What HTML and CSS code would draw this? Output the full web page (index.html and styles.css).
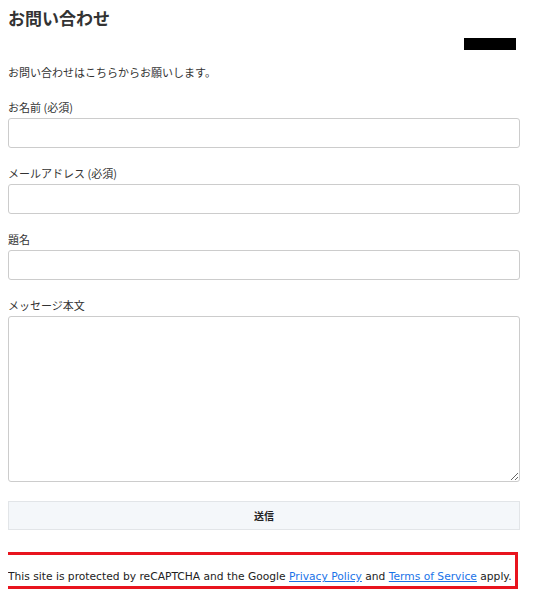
FILE: index.html
```html
<!DOCTYPE html>
<html lang="ja">
<head>
  <meta charset="UTF-8" />
  <meta name="viewport" content="width=device-width, initial-scale=1.0"/>
  <title>お問い合わせ</title>
  <link rel="stylesheet" href="styles.css">
</head>
<body>
  <div class="page">
    <h1 class="title">お問い合わせ</h1>
    <div class="bar-row"><span class="black-bar"></span></div>
    <p class="intro">お問い合わせはこちらからお願いします。</p>

    <form class="contact">
      <label class="label" for="name">お名前 (必須)</label>
      <input class="field" id="name" type="text">

      <label class="label" for="mail">メールアドレス (必須)</label>
      <input class="field" id="mail" type="email">

      <label class="label" for="subject">題名</label>
      <input class="field" id="subject" type="text">

      <label class="label" for="body">メッセージ本文</label>
      <textarea class="field message" id="body"></textarea>

      <button class="submit" type="button">送信</button>
    </form>

    <div class="recaptcha">
      This site is protected by reCAPTCHA and the Google <a href="#">Privacy Policy</a> and <a href="#">Terms of Service</a> apply.
    </div>
  </div>
</body>
</html>
```

FILE: styles.css
```css
body {
  margin: 8px;
  font-family: 'Noto Sans CJK JP', 'Noto Sans', sans-serif;
  color: #333;
  background: #fff;
}
.page {
  width: 512px;
}
.title {
  margin: 0;
  font-size: 17px;
  line-height: 20px;
  font-weight: bold;
  color: #333;
}
.bar-row {
  display: flex;
  justify-content: flex-end;
  margin-top: 10px;
  padding-right: 4px;
}
.black-bar {
  width: 52px;
  height: 12px;
  background: #000;
}
.intro {
  margin: 14px 0 19px;
  font-size: 11px;
  line-height: 16px;
}
.contact {
  display: flex;
  flex-direction: column;
}
.label {
  font-size: 11px;
  line-height: 16px;
  margin-bottom: 3px;
}
.field {
  box-sizing: border-box;
  height: 30px;
  margin: 0 0 17px;
  border: 1px solid #ccc;
  border-radius: 3px;
  background: #fff;
  font-size: 12px;
}
.message {
  height: 166px;
  margin-bottom: 19px;
  resize: vertical;
}
.submit {
  height: 29px;
  border: 1px solid #e2e5e8;
  background: #f4f7fa;
  font-family: 'Noto Sans CJK JP', sans-serif;
  font-size: 10px;
  font-weight: bold;
  color: #222;
}
.recaptcha {
  margin: 22px 0 0 -6px;
  width: 516px;
  box-sizing: border-box;
  border: 3px solid #e8141e;
  padding: 15px 0 2px 3px;
  font-family: 'DejaVu Sans', sans-serif;
  font-size: 10.7px;
  line-height: 14px;
  color: #222;
  white-space: nowrap;
}
.recaptcha a {
  color: #1a73e8;
}
```
